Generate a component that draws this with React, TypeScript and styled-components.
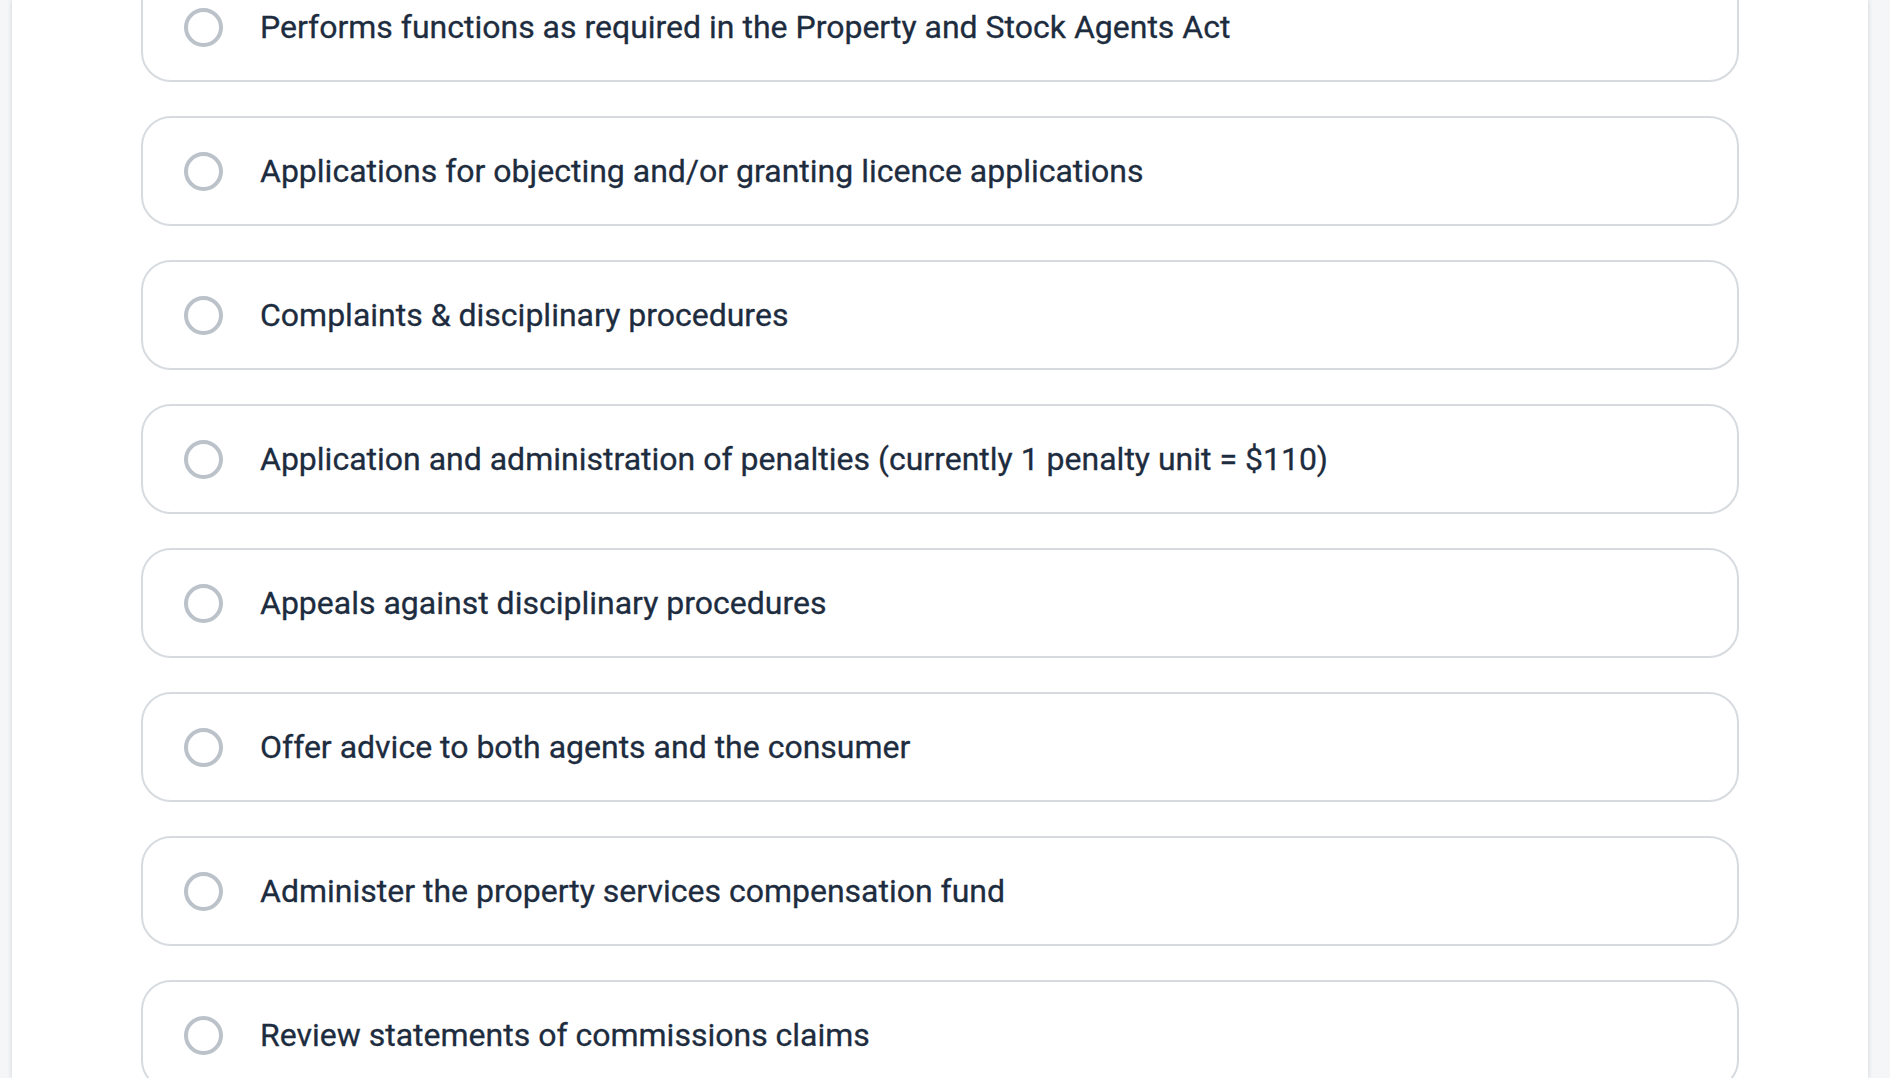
import React from "react";
import styled, { createGlobalStyle } from "styled-components";

const GlobalStyle = createGlobalStyle`
  html, body {
    margin: 0;
    padding: 0;
    height: 100%;
    overflow: hidden;
    background: #f5f6f8;
  }
  #root { height: 100%; }
`;

const Page = styled.div`
  height: 1078px;
  display: flex;
  padding: 0 22px 0 12px;
  overflow: hidden;
`;

const Panel = styled.main`
  flex: 1;
  background: #ffffff;
  box-shadow: 0 0 5px rgba(40, 50, 70, 0.18);
  overflow: hidden;
`;

const OptionList = styled.ul`
  list-style: none;
  margin: -28px 0 0 0;
  padding: 0 129px;
  display: flex;
  flex-direction: column;
  gap: 34px;
`;

const OptionCard = styled.li`
  box-sizing: border-box;
  height: 110px;
  border: 2px solid #d7dbe0;
  border-radius: 30px;
  display: flex;
  align-items: center;
  gap: 37px;
  padding: 0 41px;
  background: #fff;
  cursor: pointer;
`;

const Radio = styled.span`
  box-sizing: border-box;
  width: 39px;
  height: 39px;
  flex: 0 0 39px;
  border: 4px solid #bcc2c9;
  border-radius: 50%;
`;

const Label = styled.span`
  font-family: Roboto, "Liberation Sans", sans-serif;
  font-size: 32px;
  color: #1d2c3e;
  white-space: nowrap;
  -webkit-text-stroke: 0.3px #1d2c3e;
`;

const options = [
  "Performs functions as required in the Property and Stock Agents Act",
  "Applications for objecting and/or granting licence applications",
  "Complaints & disciplinary procedures",
  "Application and administration of penalties (currently 1 penalty unit = $110)",
  "Appeals against disciplinary procedures",
  "Offer advice to both agents and the consumer",
  "Administer the property services compensation fund",
  "Review statements of commissions claims",
];

export default function App() {
  return (
    <>
      <GlobalStyle />
      <Page>
        <Panel>
          <OptionList>
            {options.map((o) => (
              <OptionCard key={o}>
                <Radio />
                <Label>{o}</Label>
              </OptionCard>
            ))}
          </OptionList>
        </Panel>
      </Page>
    </>
  );
}
